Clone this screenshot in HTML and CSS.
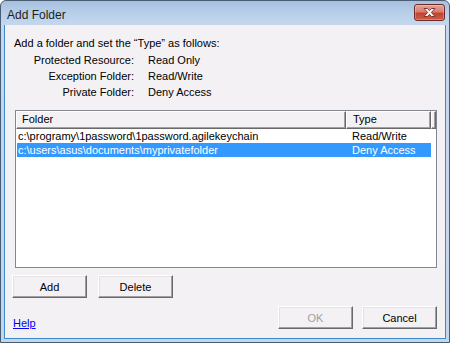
FILE: index.html
```html
<!DOCTYPE html>
<html>
<head>
<meta charset="utf-8">
<link rel="stylesheet" href="styles.css">
</head>
<body>
<div class="window">
  <div class="titlebar">
    <span class="title">Add Folder</span>
    <span class="close">
      <svg width="17" height="11" viewBox="0 0 17 11">
        <path d="M3 1.5 L6.5 1.5 L8.5 3.7 L10.5 1.5 L14 1.5 L10.3 5.5 L14 9.5 L10.5 9.5 L8.5 7.3 L6.5 9.5 L3 9.5 L6.7 5.5 Z" fill="#fff" stroke="#7d3a33" stroke-width="1" stroke-linejoin="round"/>
      </svg>
    </span>
  </div>
  <div class="client">
    <div class="intro">Add a folder and set the “Type” as follows:</div>
    <div class="legend">
      <span class="lbl">Protected Resource:</span><span>Read Only</span>
      <span class="lbl">Exception Folder:</span><span>Read/Write</span>
      <span class="lbl">Private Folder:</span><span>Deny Access</span>
    </div>
    <div class="listbox">
      <div class="header">
        <div class="hcell hfolder">Folder</div>
        <div class="hcell htype">Type</div>
        <div class="hcell hrest"></div>
      </div>
      <div class="row">
        <span class="cfolder">c:\programy\1password\1password.agilekeychain</span>
        <span class="ctype">Read/Write</span>
      </div>
      <div class="row selected">
        <span class="cfolder">c:\users\asus\documents\myprivatefolder</span>
        <span class="ctype">Deny Access</span>
      </div>
    </div>
    <div class="actions">
      <button class="btn">Add</button>
      <button class="btn">Delete</button>
    </div>
    <div class="footer">
      <a class="help" href="#">Help</a>
      <div class="dlgbtns">
        <button class="btn disabled">OK</button>
        <button class="btn">Cancel</button>
      </div>
    </div>
  </div>
</div>
</body>
</html>
```

FILE: styles.css
```css
html, body {
  margin: 0;
  padding: 0;
  background: #ffffff;
}
body {
  font-family: "Liberation Sans", Arial, sans-serif;
  font-size: 11px;
  color: #000;
}
.window {
  width: 450px;
  height: 343px;
  box-sizing: border-box;
  border: 1px solid #4a5c72;
  border-radius: 6px 6px 0 0;
  background: linear-gradient(#a6c0df 0px, #b8cfea 12px, #c4d7ee 24px, #c3d6ec 100%);
  display: flex;
  flex-direction: column;
}
.titlebar {
  height: 24px;
  display: flex;
  justify-content: space-between;
  align-items: flex-start;
  padding-left: 6px;
  padding-right: 4px;
}
.title {
  font-size: 12px;
  line-height: 16px;
  margin-top: 6px;
  color: #1e1e1e;
}
.close {
  margin-top: 3px;
  width: 29px;
  height: 15px;
  border: 1px solid #6e2b26;
  border-radius: 3px;
  background: linear-gradient(#e5a397 0%, #d7806f 45%, #c2432f 55%, #cf5d47 100%);
  display: flex;
  align-items: center;
  justify-content: center;
  box-shadow: inset 0 0 0 1px rgba(255,255,255,0.25);
}
.close svg { display: block; }
.client {
  flex: 1;
  margin: 0 3px 3px 3px;
  border: 1px solid #3d8bc9;
  border-top: none;
  background: #f4f1f4;
  display: flex;
  flex-direction: column;
  padding: 0 8px 0 0;
}
.intro {
  margin-top: 10px;
  margin-left: 9px;
  line-height: 16px;
}
.legend {
  margin-top: 1px;
  margin-left: 4px;
  display: grid;
  grid-template-columns: 125px auto;
  column-gap: 14px;
  line-height: 16px;
}
.lbl { text-align: right; }
.listbox {
  margin-top: 10px;
  margin-left: 10px;
  width: 422px;
  height: 158px;
  box-sizing: border-box;
  border: 1px solid #828790;
  background: #fff;
}
.header {
  display: flex;
  height: 18px;
}
.hcell {
  box-sizing: border-box;
  height: 18px;
  background: #f4f1f4;
  border-top: 1px solid #fff;
  border-left: 1px solid #fff;
  border-right: 1px solid #696969;
  border-bottom: 1px solid #696969;
  box-shadow: inset -1px -1px 0 #a0a0a0;
  line-height: 15px;
  padding-left: 5px;
  white-space: nowrap;
}
.hfolder { width: 330px; }
.htype { width: 85px; padding-left: 6px; }
.hrest { width: 5px; padding: 0; }
.row {
  display: flex;
  height: 14px;
  line-height: 14px;
  margin-left: 1px;
  width: 414px;
  white-space: nowrap;
}
.cfolder { width: 329px; padding-left: 1px; box-sizing: border-box; }
.ctype { padding-left: 6px; }
.selected {
  background: #3399ff;
  color: #fff;
}
.actions {
  margin-top: 7px;
  margin-left: 7px;
  display: flex;
  gap: 11px;
}
.btn {
  width: 75px;
  height: 23px;
  box-sizing: border-box;
  font-family: "Liberation Sans", Arial, sans-serif;
  font-size: 11px;
  color: #000;
  background: #f4f1f4;
  border-top: 1px solid #fff;
  border-left: 1px solid #fff;
  border-right: 1px solid #696969;
  border-bottom: 1px solid #696969;
  box-shadow: inset -1px -1px 0 #a0a0a0, inset 1px 1px 0 #e3e3e3;
  padding: 0;
  margin: 0;
}
.btn.disabled { color: #a0a0a0; }
.footer {
  margin-top: 8px;
  display: flex;
  justify-content: space-between;
  align-items: flex-start;
}
.help {
  margin-left: 8px;
  margin-top: 9px;
  line-height: 16px;
  color: #0000ff;
  text-decoration: underline;
}
.dlgbtns {
  display: flex;
  gap: 9px;
}
```
